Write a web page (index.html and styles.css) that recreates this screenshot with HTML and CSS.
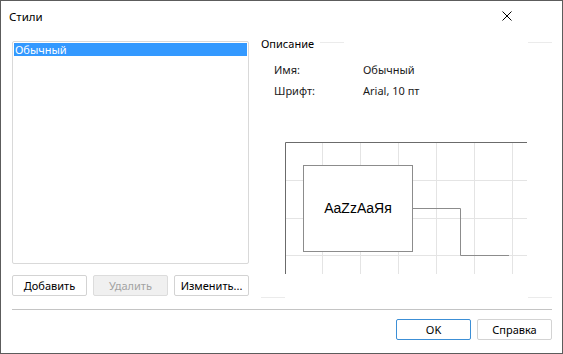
FILE: index.html
```html
<!DOCTYPE html>
<html lang="ru">
<head>
  <meta charset="UTF-8">
  <title>Стили</title>
  <link rel="stylesheet" href="styles.css">
</head>
<body>

<div class="dialog">
  <div class="titlebar">
    <span class="title">Стили</span>
    <svg class="close" width="10" height="10" viewBox="0 0 10 10">
      <path d="M0.5 0.5 L9.5 9.5 M9.5 0.5 L0.5 9.5" stroke="#000" stroke-width="1"/>
    </svg>
  </div>

  <div class="content">
    <div class="left">
      <div class="list">
        <div class="list-item selected">Обычный</div>
      </div>
      <div class="list-buttons">
        <button class="btn">Добавить</button>
        <button class="btn" disabled>Удалить</button>
        <button class="btn">Изменить...</button>
      </div>
    </div>

    <div class="right">
      <div class="group-head">
        <span class="group-label">Описание</span>
        <span class="corner-line"></span>
        <span class="spacer"></span>
        <span class="corner-line"></span>
      </div>
      <div class="info">
        <span>Имя:</span><span>Обычный</span>
        <span>Шрифт:</span><span>Arial, 10 пт</span>
      </div>
      <svg class="preview" width="242" height="132" viewBox="0 0 242 132">
        <g stroke="#e4e4e4" stroke-width="1">
          <path d="M37.5 0 V132 M75.5 0 V132 M113.5 0 V132 M151.5 0 V132 M189.5 0 V132 M227.5 0 V132"/>
          <path d="M0 38.5 H242 M0 76.5 H242 M0 113.5 H242"/>
        </g>
        <path d="M0.5 132 V0.5 H242" fill="none" stroke="#6b6b6b"/>
        <rect x="18.5" y="23.5" width="109" height="86" fill="#fff" stroke="#8c8c8c"/>
        <text x="73" y="71" text-anchor="middle" class="sample">AaZzAaЯя</text>
        <path d="M127.5 66.5 H175.5 V113.5 H224" fill="none" stroke="#8c8c8c"/>
      </svg>
      <div class="group-foot">
        <span class="corner-line"></span>
        <span class="spacer"></span>
        <span class="corner-line"></span>
      </div>
    </div>
  </div>

  <div class="separator"></div>

  <div class="footer">
    <button class="btn default">OK</button>
    <button class="btn">Справка</button>
  </div>
</div>

</body>
</html>
```

FILE: styles.css
```css
body {
  margin: 0;
  background: #fff;
  font-family: "Noto Sans", "Open Sans", sans-serif;
  font-size: 11px;
  color: #000;
}
.dialog {
  width: 563px;
  height: 354px;
  box-sizing: border-box;
  border: 1px solid #5c5c5c;
  background: #fff;
}
.titlebar {
  height: 31px;
  display: flex;
  align-items: center;
  justify-content: space-between;
  padding-left: 8px;
  padding-right: 50px;
}
.title {
  font-size: 11.5px;
  margin-top: 0;
}
.close {
  display: block;
  margin-top: -2px;
}
.content {
  height: 277px;
  display: flex;
  gap: 12px;
  padding: 0 10px 0 11px;
}
.left {
  width: 237px;
  padding-top: 9px;
}
.list {
  height: 223px;
  box-sizing: border-box;
  border: 1px solid #d9d9d9;
  border-radius: 2px;
  padding: 1px;
}
.list-item {
  height: 13px;
  line-height: 13px;
  padding-left: 1px;
}
.list-item.selected {
  background: #3399ff;
  color: #fff;
}
.list-buttons {
  display: flex;
  justify-content: space-between;
  margin-top: 11px;
}
.btn {
  width: 75px;
  height: 21px;
  box-sizing: border-box;
  border: 1px solid #d3d3d3;
  border-radius: 2px;
  background: #fff;
  font-family: inherit;
  font-size: 11px;
  color: #000;
  padding: 0;
}
.btn:disabled {
  background: #f0f0f0;
  color: #a3a3a3;
  border-color: #dcdcdc;
}
.btn.default {
  border-color: #3c8fd6;
}
.right {
  flex: 1;
  display: flex;
  flex-direction: column;
}
.group-head {
  display: flex;
  align-items: flex-start;
  margin-top: 4px;
  height: 16px;
}
.group-label {
  line-height: 16px;
  margin-right: 6px;
}
.group-head .corner-line {
  margin-top: 6px;
}
.corner-line {
  width: 24px;
  height: 1px;
  background: #ebebeb;
}
.spacer {
  flex: 1;
}
.info {
  display: grid;
  grid-template-columns: 89px auto;
  grid-auto-rows: 21px;
  align-items: center;
  margin: 7px 0 0 13px;
  color: #1a1a1a;
}
.preview {
  display: block;
  margin: 41px 0 0 24px;
}
.sample {
  font-family: "Liberation Sans", Arial, sans-serif;
  font-size: 14px;
  fill: #000;
}
.group-foot {
  display: flex;
  margin-top: 23px;
}
.separator {
  height: 1px;
  background: #c4c4c4;
  margin: 0 10px 0 11px;
}
.footer {
  display: flex;
  justify-content: flex-end;
  gap: 6px;
  padding: 9px 10px 0 0;
}
```
